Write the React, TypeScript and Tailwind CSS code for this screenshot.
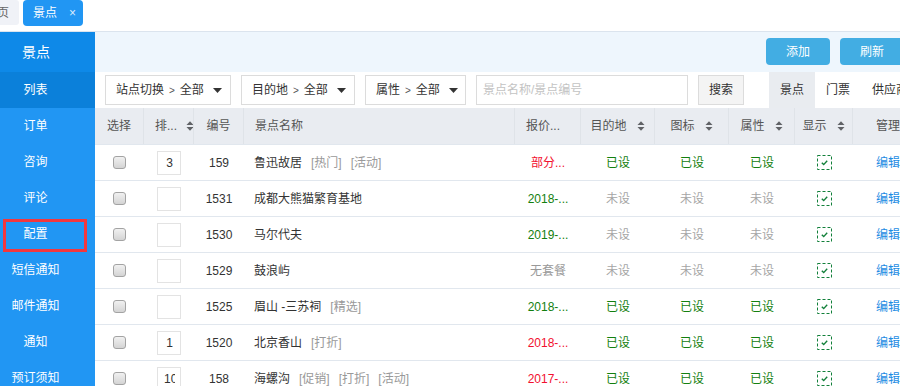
import React from "react";

type Row = {
  sort: string;
  id: string;
  name: string;
  tags: string[];
  price: string;
  priceColor: "red" | "green" | "gray";
  set: boolean;
};

const rows: Row[] = [
  { sort: "3", id: "159", name: "鲁迅故居", tags: ["[热门]", "[活动]"], price: "部分...", priceColor: "red", set: true },
  { sort: "", id: "1531", name: "成都大熊猫繁育基地", tags: [], price: "2018-...", priceColor: "green", set: false },
  { sort: "", id: "1530", name: "马尔代夫", tags: [], price: "2019-...", priceColor: "green", set: false },
  { sort: "", id: "1529", name: "鼓浪屿", tags: [], price: "无套餐", priceColor: "gray", set: false },
  { sort: "", id: "1525", name: "眉山 -三苏祠", tags: ["[精选]"], price: "2018-...", priceColor: "green", set: true },
  { sort: "1", id: "1520", name: "北京香山", tags: ["[打折]"], price: "2018-...", priceColor: "red", set: true },
  { sort: "10", id: "158", name: "海螺沟", tags: ["[促销]", "[打折]", "[活动]"], price: "2017-...", priceColor: "red", set: true },
];

const sideItems = ["订单", "咨询", "评论", "配置", "短信通知", "邮件通知", "通知", "预订须知"];

function SortIcon() {
  return (
    <svg width="8" height="12" viewBox="0 0 8 12" className="shrink-0">
      <path d="M0.5 5 L4 1.2 L7.5 5 Z" fill="#606266" />
      <path d="M0.5 7 L4 10.8 L7.5 7 Z" fill="#606266" />
    </svg>
  );
}

function Caret() {
  return (
    <svg width="9" height="5" viewBox="0 0 9 5" className="shrink-0">
      <path d="M0 0 L9 0 L4.5 5 Z" fill="#333" />
    </svg>
  );
}

function ShowIcon() {
  return (
    <svg width="15" height="15" viewBox="0 0 15 15">
      <rect x="0.5" y="0.5" width="14" height="14" fill="none" stroke="#12803a" strokeWidth="1" strokeDasharray="3 2" />
      <path d="M4.8 7.8 L6.7 9.6 L10.2 5.8" fill="none" stroke="#12803a" strokeWidth="1.4" />
    </svg>
  );
}

function Checkbox() {
  return <div className="w-[13px] h-[13px] rounded-[3px] border border-[#a3a3a3] bg-gradient-to-b from-[#f1f1f1] to-[#d4d4d4]" />;
}

const cols = "grid grid-cols-[49px_50px_50px_271px_66px_74px_74px_66px_58px_70px]";

function Dropdown({ label, w }: { label: string; w: string }) {
  return (
    <div className={`${w} h-[30px] mt-[3px] border border-[#dcdcdc] bg-white flex items-center pl-[10px] text-[12px] text-[#333] shrink-0`}>
      <span>{label}</span>
      <span className="mx-[5px] text-[10px] text-[#555]">&gt;</span>
      <span>全部</span>
      <span className="ml-[9px]">
        <Caret />
      </span>
    </div>
  );
}

function Status({ set }: { set: boolean }) {
  return set ? <span className="text-[#13800f]">已设</span> : <span className="text-[#a5a5a5]">未设</span>;
}

export default function App() {
  return (
    <div className="w-[900px] h-[386px] overflow-hidden bg-white font-['Liberation_Sans','Noto_Sans_CJK_SC',sans-serif] text-[12px] text-[#333] flex flex-col">
      {/* Top tab bar */}
      <div className="h-[32px] shrink-0 border-b border-[#dbe4ee] flex items-start gap-[4px] overflow-hidden">
        <div className="ml-[-25px] h-[25px] px-[10px] rounded-[3px] bg-[#f0f2f7] text-[#666] flex items-center">首页</div>
        <div className="h-[26px] w-[60px] rounded-[4px] bg-[#2196f3] text-white flex items-center pl-[10px]">
          <span>景点</span>
          <span className="ml-[12px] text-[12px] text-[#dcecfc]">×</span>
        </div>
      </div>

      <div className="flex flex-1 min-h-0 overflow-hidden">
        {/* Sidebar */}
        <div className="w-[95px] shrink-0 bg-[#2196f3] text-white flex flex-col">
          <div className="h-[40px] shrink-0 bg-[#0e89e8] flex items-center">
            <span className="w-[72px] text-center text-[14px]">景点</span>
          </div>
          <div className="h-[36px] shrink-0 bg-[#0b80da] flex items-center">
            <span className="w-[71px] text-center">列表</span>
          </div>
          {sideItems.map((s) => (
            <div key={s} className="h-[36px] shrink-0 flex items-center relative">
              <span className="w-[71px] text-center">{s}</span>
              {s === "配置" && (
                <div className="absolute left-[3px] top-[3px] w-[84px] h-[33px] border-[3px] border-[#f2373d]" />
              )}
            </div>
          ))}
        </div>

        {/* Main */}
        <div className="flex-1 min-w-0 overflow-hidden flex flex-col">
          <div className="h-[40px] shrink-0 bg-[#eef6fd] flex items-start justify-end gap-[10px] pt-[6px] mr-[-4px]">
            <div className="w-[64px] h-[27px] rounded-[4px] bg-[#42ade3] text-white flex items-center justify-center">添加</div>
            <div className="w-[64px] h-[27px] rounded-[4px] bg-[#42ade3] text-white flex items-center justify-center">刷新</div>
          </div>

          {/* Filters */}
          <div className="h-[36px] shrink-0 flex items-start pl-[10px] gap-[10px]">
            <Dropdown label="站点切换" w="w-[126px]" />
            <Dropdown label="目的地" w="w-[114px]" />
            <Dropdown label="属性" w="w-[101px]" />
            <div className="w-[212px] h-[30px] mt-[3px] border border-[#dcdcdc] flex items-center pl-[6px] text-[#c3c3c3] shrink-0">
              景点名称/景点编号
            </div>
            <div className="w-[46px] h-[30px] mt-[3px] border border-[#dcdcdc] bg-[#f4f4f4] flex items-center justify-center shrink-0">
              搜索
            </div>
            <div className="ml-[15px] flex h-[36px] shrink-0">
              <div className="px-[11px] h-[36px] bg-[#e9ecf0] flex items-center">景点</div>
              <div className="px-[11px] h-[36px] flex items-center">门票</div>
              <div className="px-[11px] h-[36px] flex items-center whitespace-nowrap">供应商</div>
            </div>
          </div>

          {/* Table */}
          <div className="w-[923px] shrink-0">
            <div className={`${cols} h-[36px] bg-[#e9ecf1] text-[#555]`}>
              <div className="flex items-center justify-center border-r border-[#dfe3e8]">选择</div>
              <div className="flex items-center pl-[11px] border-r border-[#dfe3e8] overflow-hidden whitespace-nowrap">
                <span>排...</span>
                <span className="ml-[9px] flex">
                  <SortIcon />
                </span>
              </div>
              <div className="flex items-center justify-center border-r border-[#dfe3e8]">编号</div>
              <div className="flex items-center pl-[11px] border-r border-[#dfe3e8]">景点名称</div>
              <div className="flex items-center pl-[11px] border-r border-[#dfe3e8]">报价...</div>
              <div className="flex items-center justify-center gap-[10px] border-r border-[#dfe3e8]">
                <span>目的地</span>
                <SortIcon />
              </div>
              <div className="flex items-center justify-center gap-[10px] border-r border-[#dfe3e8]">
                <span>图标</span>
                <SortIcon />
              </div>
              <div className="flex items-center justify-center gap-[10px] border-r border-[#dfe3e8]">
                <span>属性</span>
                <SortIcon />
              </div>
              <div className="flex items-center justify-center gap-[10px] border-r border-[#dfe3e8]">
                <span>显示</span>
                <SortIcon />
              </div>
              <div className="flex items-center justify-center">管理</div>
            </div>

            {rows.map((r) => (
              <div key={r.id} className={`${cols} h-[36px] border-t border-[#e1e7ee]`}>
                <div className="flex items-center justify-center">
                  <Checkbox />
                </div>
                <div className="flex items-center justify-center">
                  <div className="w-[24px] h-[24px] border border-[#e3e3e3] pl-[6px] flex items-center">
                    <div className="w-[11px] overflow-hidden whitespace-nowrap text-center text-[#333]">{r.sort}</div>
                  </div>
                </div>
                <div className="flex items-center justify-center">{r.id}</div>
                <div className="flex items-center pl-[10px] whitespace-nowrap">
                  <span>{r.name}</span>
                  {r.tags.map((t, i) => (
                    <span key={i} className="ml-[9px] text-[#999]">
                      {t}
                    </span>
                  ))}
                </div>
                <div
                  className={`flex items-center justify-center ${
                    r.priceColor === "red" ? "text-[#f2102f]" : r.priceColor === "green" ? "text-[#13800f]" : "text-[#999]"
                  }`}
                >
                  {r.price}
                </div>
                <div className="flex items-center justify-center">
                  <Status set={r.set} />
                </div>
                <div className="flex items-center justify-center">
                  <Status set={r.set} />
                </div>
                <div className="flex items-center justify-center">
                  <Status set={r.set} />
                </div>
                <div className="flex items-center justify-center">
                  <ShowIcon />
                </div>
                <div className="flex items-center justify-center text-[#1d8ce3]">编辑</div>
              </div>
            ))}
          </div>
        </div>
      </div>
    </div>
  );
}
